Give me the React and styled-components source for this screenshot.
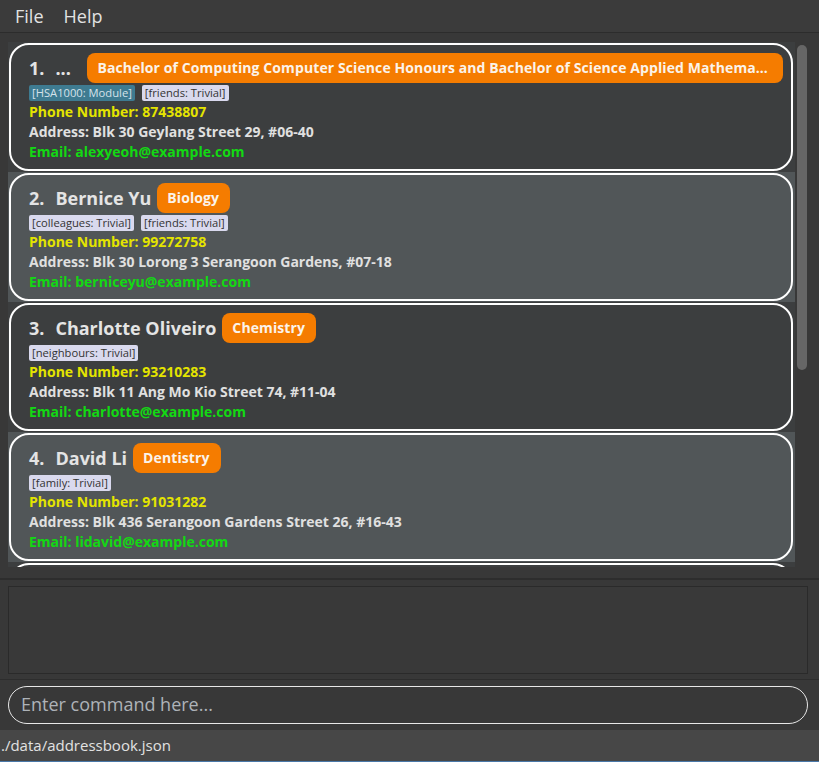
import React from "react";
import styled, { createGlobalStyle } from "styled-components";

const GlobalStyle = createGlobalStyle`
  html, body {
    margin: 0;
    padding: 0;
    background: #383838;
  }
  * {
    box-sizing: border-box;
  }
  body {
    font-family: "Open Sans", "Noto Sans", "DejaVu Sans", sans-serif;
  }
`;

const persons = [
  {
    name: "...",
    truncated: true,
    major: "Bachelor of Computing Computer Science Honours and Bachelor of Science Applied Mathematics",
    tags: [
      { label: "HSA1000: Module", kind: "module" },
      { label: "friends: Trivial", kind: "trivial" },
    ],
    phone: "87438807",
    address: "Blk 30 Geylang Street 29, #06-40",
    email: "alexyeoh@example.com",
  },
  {
    name: "Bernice Yu",
    major: "Biology",
    tags: [
      { label: "colleagues: Trivial", kind: "trivial" },
      { label: "friends: Trivial", kind: "trivial" },
    ],
    phone: "99272758",
    address: "Blk 30 Lorong 3 Serangoon Gardens, #07-18",
    email: "berniceyu@example.com",
  },
  {
    name: "Charlotte Oliveiro",
    major: "Chemistry",
    tags: [{ label: "neighbours: Trivial", kind: "trivial" }],
    phone: "93210283",
    address: "Blk 11 Ang Mo Kio Street 74, #11-04",
    email: "charlotte@example.com",
  },
  {
    name: "David Li",
    major: "Dentistry",
    tags: [{ label: "family: Trivial", kind: "trivial" }],
    phone: "91031282",
    address: "Blk 436 Serangoon Gardens Street 26, #16-43",
    email: "lidavid@example.com",
  },
];

//스타일
const Window = styled.div`
  width: 100%;
  height: 762px;
  display: flex;
  flex-direction: column;
  background: #383838;
  overflow: hidden;
`;

const MenuBar = styled.div`
  height: 33px;
  flex: none;
  display: flex;
  align-items: center;
  padding-left: 5px;
  background: #3b3b3b;
  border-bottom: 1px solid #2c2c2c;
`;

const MenuItem = styled.span`
  padding: 0 10px;
  font-size: 18px;
  color: #e2e2e2;
`;

const ListPanel = styled.div`
  height: 547px;
  flex: none;
  display: flex;
  padding: 9px 0 11px 8px;
  border-bottom: 2px solid #2d2d2d;
`;

const ListViewport = styled.div`
  width: 787px;
  height: 525px;
  overflow: hidden;
`;

const ScrollTrack = styled.div`
  flex: 1;
  padding: 3px 2px;
`;

const ScrollThumb = styled.div`
  width: 10px;
  height: 325px;
  border-radius: 5px;
  background: #666666;
`;

const Cell = styled.div`
  height: 130px;
  padding: 1px 2px 0 1px;
  background: ${(p) => (p.$odd ? "#515658" : "#3c3e3f")};
`;

const Card = styled.div`
  height: 128px;
  border: 2px solid #ffffff;
  border-radius: 20px;
  padding: 8px 8px 7px 18px;
  display: flex;
  flex-direction: column;
`;

const TitleRow = styled.div`
  height: 30px;
  display: flex;
  align-items: center;
  gap: 6px;
  min-width: 0;
`;

const Title = styled.span`
  flex: none;
  font-size: 18px;
  font-weight: 700;
  color: #e4e4e4;
  white-space: nowrap;
  width: ${(p) => (p.$width ? `${p.$width}px` : "auto")};
`;

const Index = styled.span`
  margin-right: 5px;
`;

const Badge = styled.span`
  flex: 0 1 auto;
  min-width: 0;
  height: 30px;
  line-height: 30px;
  padding: 0 11px 0 10px;
  border-radius: 8px;
  background: #f57c00;
  color: #fbf3ea;
  font-size: 14px;
  font-weight: 700;
  letter-spacing: 0.1px;
  white-space: nowrap;
  overflow: hidden;
  text-overflow: ellipsis;
`;

const TagRow = styled.div`
  display: flex;
  gap: 7px;
  margin-top: 2px;
  margin-bottom: 1px;
  height: 16px;
`;

const Tag = styled.span`
  height: 16px;
  line-height: 16px;
  padding: 0 3px;
  border-radius: 2px;
  font-size: 11.2px;
  background: ${(p) => (p.$kind === "module" ? "#3e7b91" : "#d9d9ee")};
  color: ${(p) => (p.$kind === "module" ? "#d6e2ea" : "#333333")};
  white-space: nowrap;
`;

const InfoLine = styled.div`
  height: 20px;
  line-height: 20px;
  font-size: 14px;
  font-weight: 700;
  white-space: nowrap;
  color: ${(p) => p.$color};
`;

const ResultPanel = styled.div`
  height: 100px;
  flex: none;
  padding: 6px 11px 5px 8px;
  border-bottom: 1px solid #2d2d2d;
`;

const ResultBox = styled.div`
  height: 100%;
  border: 1px solid #2a2a2a;
  background: #393939;
`;

const CommandPanel = styled.div`
  height: 50px;
  flex: none;
  padding: 6px 11px 6px 8px;
`;

const CommandInput = styled.input`
  width: 100%;
  height: 38px;
  border: 1px solid #e8e8e8;
  border-radius: 19px;
  background: #383838;
  padding: 0 12px 2px;
  font-family: "Open Sans", "Noto Sans", sans-serif;
  font-size: 18px;
  color: #e8e8e8;
  outline: none;

  &::placeholder {
    color: #aeb3b8;
  }
`;

const StatusBar = styled.div`
  height: 32px;
  flex: none;
  display: flex;
  align-items: center;
  padding: 0 0 1px 1px;
  background: #474747;
  border-bottom: 1px solid #4a78a8;
  font-size: 15px;
  color: #e2e2e2;
`;

function PersonCard({ person, index }) {
  return (
    <Cell $odd={index % 2 === 1}>
      <Card>
        <TitleRow>
          <Title>
            <Index>{index + 1}.</Index>
          </Title>
          <Title $width={person.truncated ? 26 : undefined}>{person.name}</Title>
          <Badge>{person.major}</Badge>
        </TitleRow>
        <TagRow>
          {person.tags.map((tag) => (
            <Tag key={tag.label} $kind={tag.kind}>
              [{tag.label}]
            </Tag>
          ))}
        </TagRow>
        <InfoLine $color="#e4e400">Phone Number: {person.phone}</InfoLine>
        <InfoLine $color="#e0e0e0">Address: {person.address}</InfoLine>
        <InfoLine $color="#13d913">Email: {person.email}</InfoLine>
      </Card>
    </Cell>
  );
}

function App() {
  return (
    <Window>
      <GlobalStyle />
      <MenuBar>
        <MenuItem>File</MenuItem>
        <MenuItem>Help</MenuItem>
      </MenuBar>

      <ListPanel>
        <ListViewport>
          {persons.map((person, i) => (
            <PersonCard key={person.email} person={person} index={i} />
          ))}
          {/* 다음 카드 윗부분만 보임 */}
          <Cell>
            <Card />
          </Cell>
        </ListViewport>
        <ScrollTrack>
          <ScrollThumb />
        </ScrollTrack>
      </ListPanel>

      <ResultPanel>
        <ResultBox />
      </ResultPanel>

      <CommandPanel>
        <CommandInput placeholder="Enter command here..." />
      </CommandPanel>

      <StatusBar>./data/addressbook.json</StatusBar>
    </Window>
  );
}

export default App;
